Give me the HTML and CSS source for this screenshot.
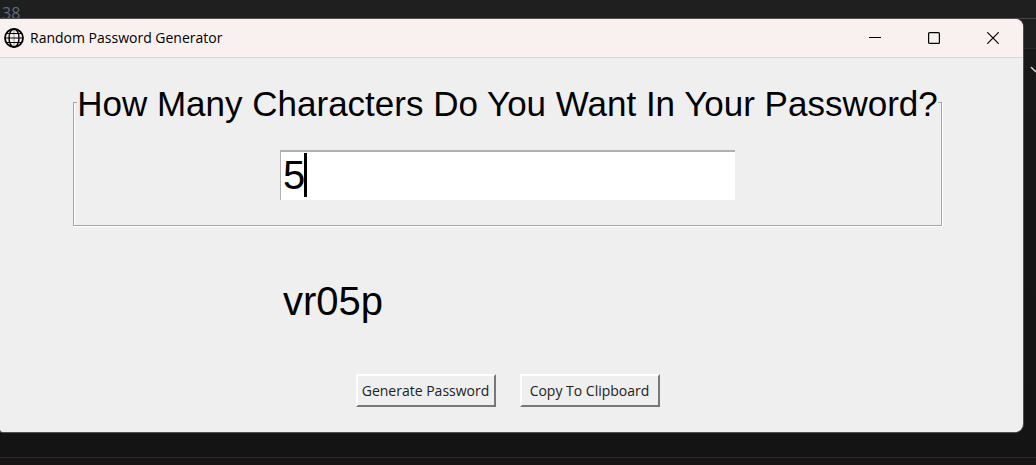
FILE: index.html
```html
<!DOCTYPE html>
<html lang="en">
<head>
<meta charset="utf-8">
<title>Random Password Generator</title>
<link rel="stylesheet" href="styles.css">
</head>
<body>
<div class="editor-top"><span class="line-number">38</span></div>
<svg class="chevron" viewBox="0 0 14 10" aria-hidden="true"><path d="M0 3h1.500" stroke="#b98a80"/><path d="M9 1l5 5" stroke="#c8d4de" stroke-width="1.500" fill="none"/></svg>
<main class="window">
  <header class="titlebar">
    <svg class="globe" viewBox="0 0 20 20" aria-hidden="true">
      <g fill="none" stroke="#000">
        <circle cx="10" cy="10" r="9" stroke-width="1.800"/>
        <ellipse cx="10" cy="10" rx="5" ry="9" stroke-width="1.400"/>
        <path d="M1 10h18M2.800 5.500h14.400M2.800 14.500h14.400" stroke-width="1.100"/>
        <path d="M10 1v18" stroke-width=".4"/>
      </g>
    </svg>
    <h1 class="title">Random Password Generator</h1>
    <div class="controls">
      <button class="control" type="button" aria-label="Minimize"><svg viewBox="0 0 12 12"><path d="M0 5.500h12"/></svg></button>
      <button class="control" type="button" aria-label="Maximize"><svg viewBox="0 0 12 12"><rect x=".6" y=".6" width="10.800" height="10.800" rx="1"/></svg></button>
      <button class="control" type="button" aria-label="Close"><svg viewBox="0 0 12 12"><path d="M.3.3l11.400 11.400M11.700.3L.3 11.700"/></svg></button>
    </div>
  </header>
  <form class="content">
    <fieldset class="group">
      <legend class="legend"><label for="length">How Many Characters Do You Want In Your Password?</label></legend>
      <div class="field">
        <input class="entry" id="length" type="text" value="5">
        <span class="caret"></span>
      </div>
    </fieldset>
    <output class="result" for="length">vr05p</output>
    <div class="actions">
      <button class="action" type="button">Generate Password</button>
      <button class="action" type="button">Copy To Clipboard</button>
    </div>
  </form>
</main>
<div class="editor-bottom"></div>
</body>
</html>
```
FILE: styles.css
```css
* { box-sizing: border-box; }

body {
  margin: 0;
  min-height: 100vh;
  display: flex;
  flex-direction: column;
  position: relative;
  overflow: hidden;
  background: linear-gradient(#1f1f1f 48px, #2b2b2b 48px, #2b2b2b 49px, #181818 49px, #141414);
  font-family: "Liberation Sans", Arial, sans-serif;
  color: #000;
}

.editor-top {
  height: 19px;
  border-bottom: 1px solid #464343;
}

.line-number {
  display: block;
  padding: 4px 2px 0;
  font: 16px/18px "Open Sans", sans-serif;
  color: #5d6b7a;
}

.chevron {
  position: absolute;
  top: 66px;
  right: 0;
  width: 14px;
  height: 10px;
}

.window {
  position: relative;
  margin-right: 13px;
  background: #efefef;
  border-radius: 0 8px 8px 3px;
  box-shadow: 0 0 0 1px #505050;
  overflow: hidden;
}

.titlebar {
  height: 39px;
  display: flex;
  align-items: center;
  padding: 0 1px 0 4px;
  background: #f9f0f0;
  border-bottom: 1px solid #d9d5d3;
}

.globe {
  width: 20px;
  height: 20px;
}

.title {
  margin: 0 auto 0 6px;
  font: 14px/20px "Open Sans", sans-serif;
}

.controls { display: flex; }

.control {
  width: 59px;
  height: 38px;
  display: grid;
  place-items: center;
  padding: 0;
  border: 0;
  background: none;
}

.control svg {
  width: 12px;
  height: 12px;
  fill: none;
  stroke: #000;
  stroke-width: 1.2;
}

.content {
  display: flex;
  flex-direction: column;
  align-items: center;
  padding: 23px 8px 25px 0;
}

.group {
  margin: 0;
  padding: 26px 3px 25px;
  border: 1px solid #a6a6a6;
  box-shadow: 1px 1px 0 #fff, inset 1px 0 0 #fff;
}

.legend {
  padding: 3px 0 0;
  font-size: 35px;
  line-height: 40px;
  white-space: nowrap;
}

.field {
  position: relative;
  width: 455px;
  margin: 0 auto;
}

.entry {
  display: block;
  width: 100%;
  height: 50px;
  padding: 0 2px 2px;
  border: 0 solid #b0b0b0;
  border-width: 2px 0 0 1px;
  border-radius: 0;
  outline: 0;
  background: #fff;
  color: #000;
  font: 40px/46px "Liberation Sans", Arial, sans-serif;
}

.caret {
  position: absolute;
  top: 3px;
  left: 24px;
  width: 3px;
  height: 44px;
  background: #000;
}

.result {
  width: 455px;
  margin-top: 52px;
  padding: 0 3px;
  font-size: 40px;
  line-height: 46px;
}

.actions {
  display: flex;
  gap: 24px;
  margin-top: 50px;
}

.action {
  width: 140px;
  height: 33px;
  padding: 0;
  border: 2px solid;
  border-color: #fff #777 #777 #fff;
  border-radius: 0;
  background: #efefef;
  color: #222;
  font: 14px/20px "Open Sans", sans-serif;
  white-space: nowrap;
}

.editor-bottom {
  flex: 1;
  display: flex;
  align-items: flex-end;
}

.editor-bottom::after {
  content: "";
  flex: 1;
  height: 7px;
  border-top: 1px solid #2b2b2b;
  background: #181414;
}
```
